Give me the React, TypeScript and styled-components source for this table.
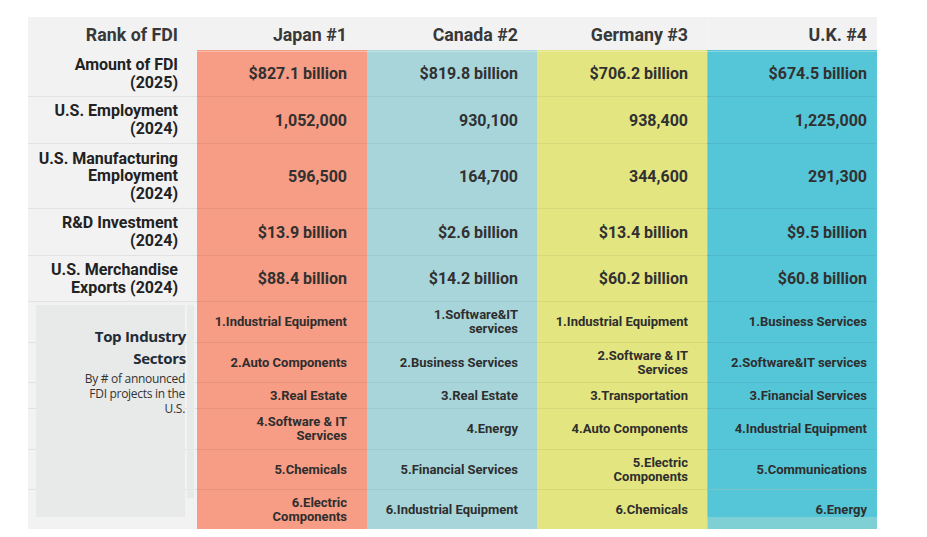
import React from "react";
import styled, { createGlobalStyle, css } from "styled-components";

const GlobalStyle = createGlobalStyle`
  html, body { margin: 0; padding: 0; background: #ffffff; }
  body { font-family: Roboto, "Liberation Sans", Arial, sans-serif; }
  * { box-sizing: border-box; }
`;

const COLORS = ["#f2f2f2", "#f79c85", "#a8d5da", "#e3e580", "#55c5d8"];
const PAD_RIGHT = [19, 20, 19, 19, 10];
const ROW_HEIGHTS = [33, 46, 47, 65, 47, 46, 41, 40, 26, 41, 40, 40];

const Page = styled.div`
  padding: 17px 0 0 28px;
`;

const Table = styled.div`
  display: grid;
  grid-template-columns: 169px repeat(4, 170px);
  grid-template-rows: ${ROW_HEIGHTS.map((h) => `${h}px`).join(" ")};
  width: 849px;
`;

type Pos = { $row: number; $col: number; $line?: boolean; $tail?: boolean };

const cellBase = css<Pos>`
  grid-row: ${(p) => p.$row};
  grid-column: ${(p) => p.$col + 1};
  background: ${(p) => COLORS[p.$col]};
  display: flex;
  align-items: center;
  justify-content: flex-end;
  text-align: right;
  padding: 0 ${(p) => PAD_RIGHT[p.$col]}px 0 8px;
  border-top: 1px solid
    ${(p) => (p.$line ? (p.$col === 0 ? "#e2e2e2" : "rgba(0,0,0,0.055)") : "transparent")};
  ${(p) =>
    p.$col === 4 &&
    css`
      box-shadow: inset 1px 0 0 rgba(255, 255, 255, 0.25);
    `}
  ${(p) =>
    p.$tail &&
    css`
      background: linear-gradient(to bottom, ${COLORS[p.$col]} calc(100% - 12px), #7fd0d5 0);
    `}
`;

const HeaderCell = styled.div<Pos>`
  ${cellBase};
  background: #f2f2f2;
  font-size: 17.8px;
  font-weight: 700;
  color: #383838;
`;

const LabelCell = styled.div<Pos>`
  ${cellBase};
  font-size: 16px;
  line-height: ${(p) => (p.$row === 4 ? "17.5px" : "18px")};
  font-weight: 700;
  color: #222222;
`;

const ValueCell = styled.div<Pos>`
  ${cellBase};
  font-size: 16px;
  font-weight: 700;
  color: #313131;
  ${(p) =>
    p.$row === 2 &&
    css`
      box-shadow: inset 0 1px 0 rgba(255, 255, 255, 0.3)
        ${p.$col === 4 ? ", inset 1px 0 0 rgba(255,255,255,0.25)" : ""};
    `}
`;

const SectorCell = styled.div<Pos>`
  ${cellBase};
  font-size: 13px;
  line-height: 14px;
  font-weight: 700;
  color: #2e2e2e;
`;

const IndustryBox = styled.div`
  grid-row: 7 / 13;
  grid-column: 1;
  margin: 4px 12px 12px 8px;
  background: #e8e9e9;
  padding-top: 20px;
  text-align: right;
  font-family: "Open Sans", "Noto Sans", sans-serif;
`;

const IndustryTitle = styled.div`
  font-size: 15px;
  line-height: 22px;
  font-weight: 700;
  color: #222b35;
  letter-spacing: -0.3px;
  margin-right: -1px;
`;

const IndustryNote = styled.div`
  font-size: 12px;
  line-height: 15px;
  font-weight: 400;
  color: #333333;
  letter-spacing: -0.3px;
  padding-left: 36px;
  padding-top: 2px;
`;

const ScrollStrip = styled.div`
  grid-row: 7 / 13;
  grid-column: 1;
  justify-self: end;
  width: 7px;
  margin: 4px 3px 31px 0;
  background: #e8e9e9;
`;

const headers = ["Rank of FDI", "Japan #1", "Canada #2", "Germany #3", "U.K. #4"];

const metrics: { label: React.ReactNode; values: string[] }[] = [
  { label: <>Amount of FDI<br />(2025)</>, values: ["$827.1 billion", "$819.8 billion", "$706.2 billion", "$674.5 billion"] },
  { label: <>U.S. Employment<br />(2024)</>, values: ["1,052,000", "930,100", "938,400", "1,225,000"] },
  { label: <>U.S. Manufacturing<br />Employment<br />(2024)</>, values: ["596,500", "164,700", "344,600", "291,300"] },
  { label: <>R&amp;D Investment<br />(2024)</>, values: ["$13.9 billion", "$2.6 billion", "$13.4 billion", "$9.5 billion"] },
  { label: <>U.S. Merchandise<br />Exports (2024)</>, values: ["$88.4 billion", "$14.2 billion", "$60.2 billion", "$60.8 billion"] },
];

const sectors: React.ReactNode[][] = [
  ["1.Industrial Equipment", <>1.Software&amp;IT<br />services</>, "1.Industrial Equipment", "1.Business Services"],
  ["2.Auto Components", "2.Business Services", <>2.Software &amp; IT<br />Services</>, "2.Software&IT services"],
  ["3.Real Estate", "3.Real Estate", "3.Transportation", "3.Financial Services"],
  [<>4.Software &amp; IT<br />Services</>, "4.Energy", "4.Auto Components", "4.Industrial Equipment"],
  ["5.Chemicals", "5.Financial Services", <>5.Electric<br />Components</>, "5.Communications"],
  [<>6.Electric<br />Components</>, "6.Industrial Equipment", "6.Chemicals", "6.Energy"],
];

export default function App() {
  return (
    <>
      <GlobalStyle />
      <Page>
        <Table>
          {headers.map((h, i) => (
            <HeaderCell key={h} $row={1} $col={i}>
              {h}
            </HeaderCell>
          ))}
          {metrics.map((m, r) => (
            <React.Fragment key={r}>
              <LabelCell $row={r + 2} $col={0} $line={r > 0}>
                <span>{m.label}</span>
              </LabelCell>
              {m.values.map((v, c) => (
                <ValueCell key={c} $row={r + 2} $col={c + 1} $line={r > 0}>
                  {v}
                </ValueCell>
              ))}
            </React.Fragment>
          ))}
          {sectors.map((row, r) => (
            <React.Fragment key={`s${r}`}>
              <LabelCell $row={r + 7} $col={0} $line />
              {row.map((s, c) => (
                <SectorCell
                  key={c}
                  $row={r + 7}
                  $col={c + 1}
                  $line
                  $tail={r === 5 && c === 3}
                >
                  <span>{s}</span>
                </SectorCell>
              ))}
            </React.Fragment>
          ))}
          <IndustryBox>
            <IndustryTitle>
              Top Industry
              <br />
              Sectors
            </IndustryTitle>
            <IndustryNote>By # of announced FDI projects in the U.S.</IndustryNote>
          </IndustryBox>
          <ScrollStrip />
        </Table>
      </Page>
    </>
  );
}
